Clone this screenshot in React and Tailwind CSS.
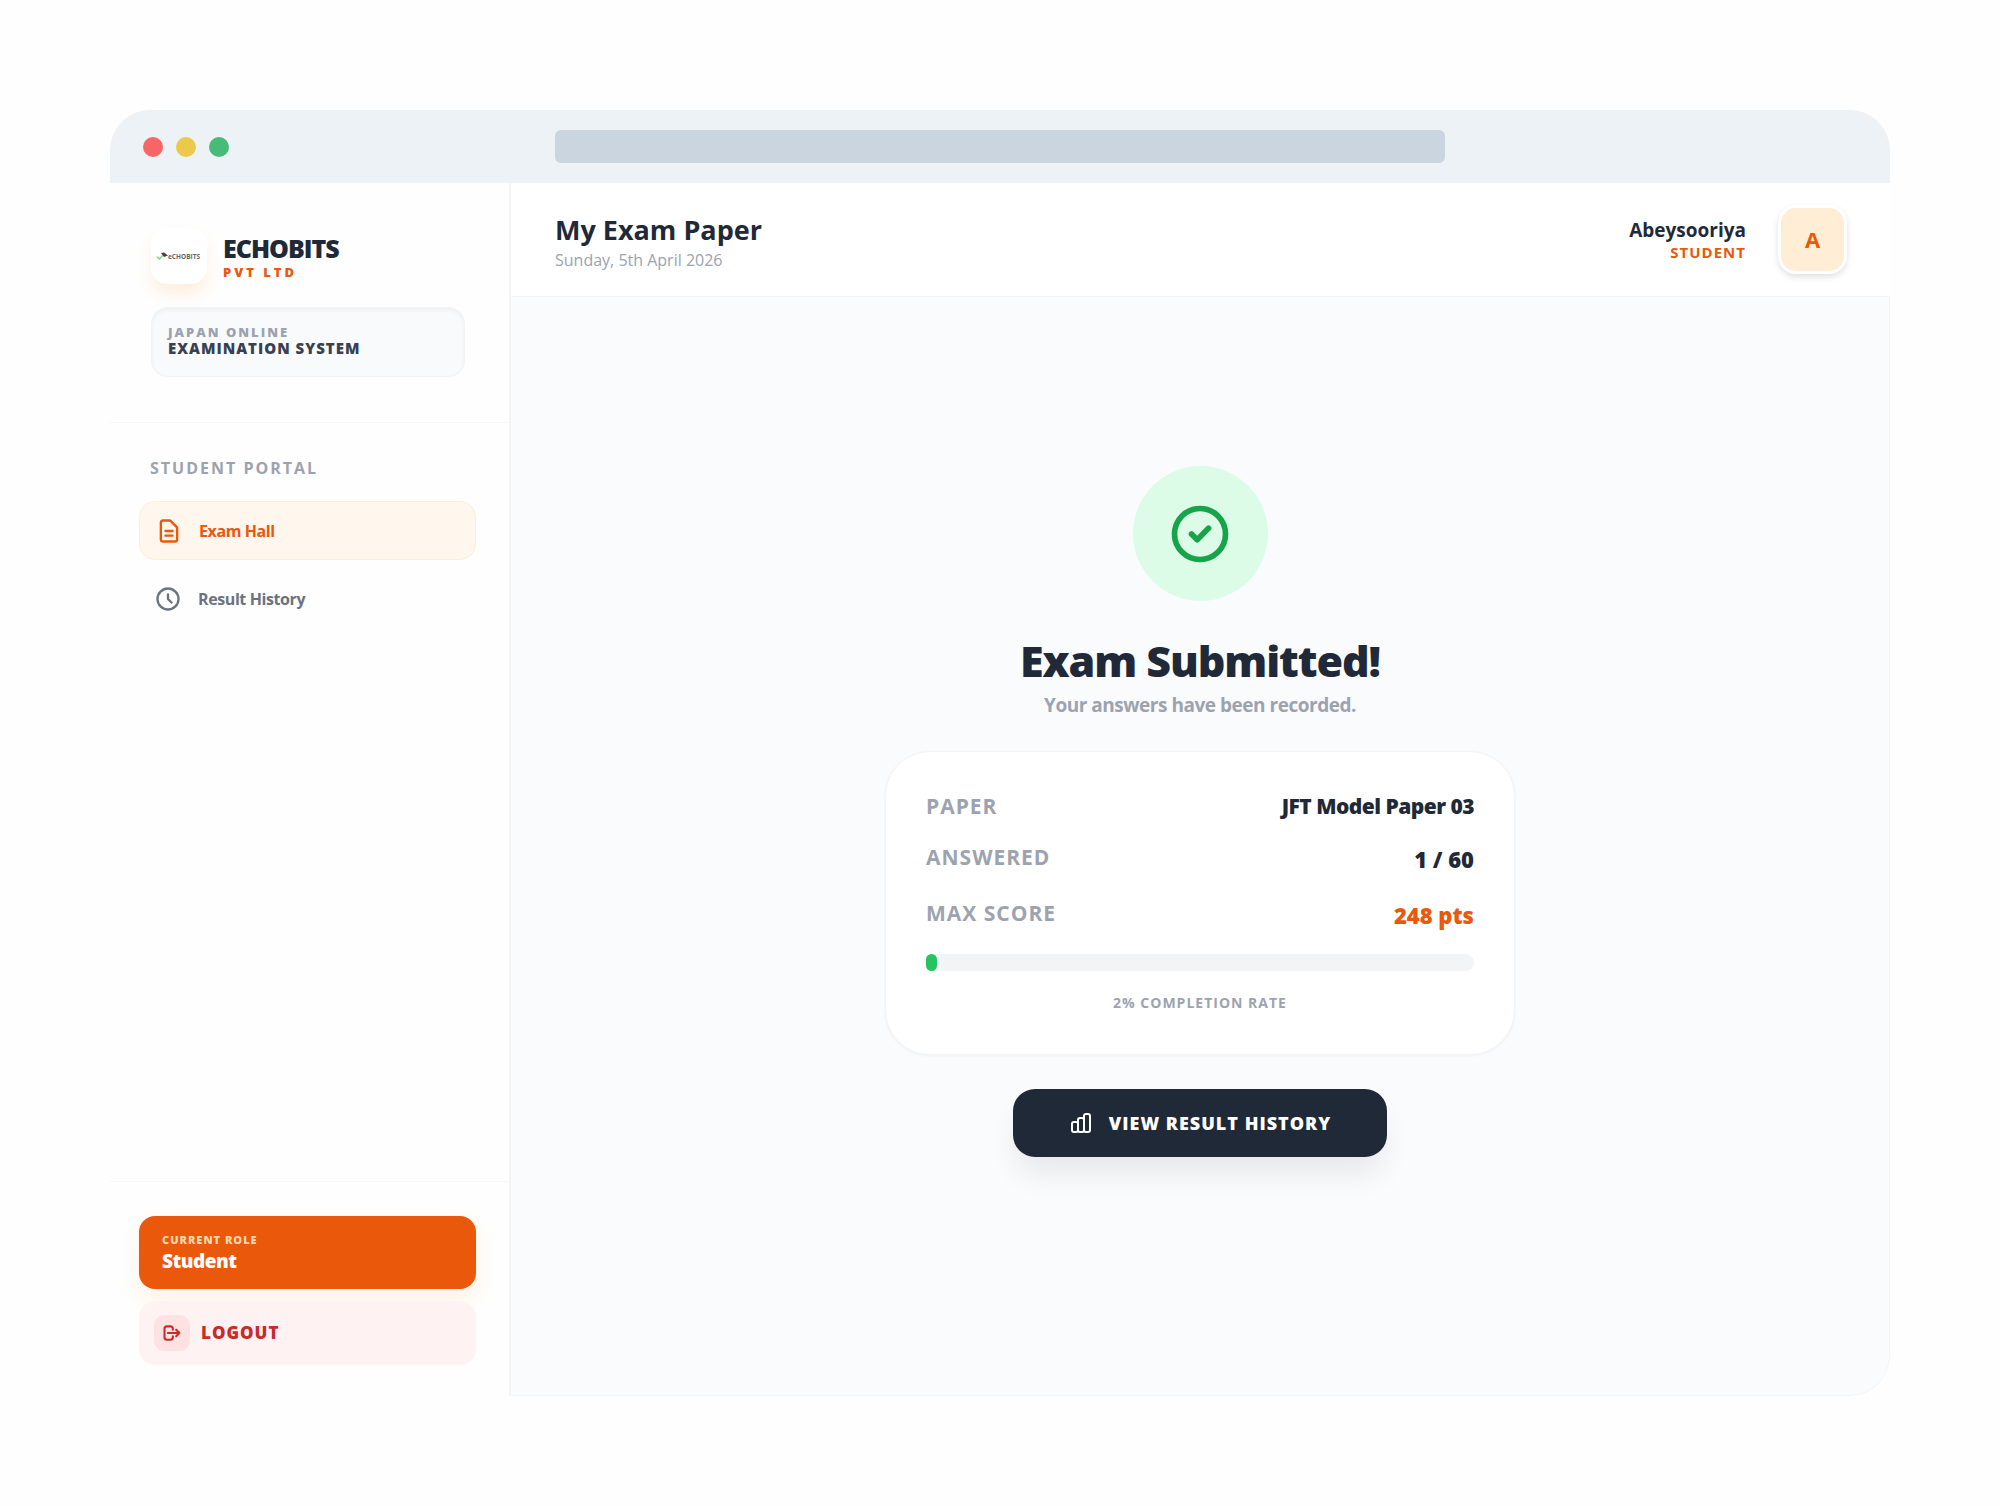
import React from 'react';

const student = { name: 'Abeysooriya', role: 'Student' };
const exam = { paper: 'JFT Model Paper 03', answered: 1, total: 60, maxScore: 248 };

function Logo() {
  return (
    <div className="flex size-14 items-center justify-center rounded-2xl bg-white shadow-[0_10px_16px_-2px_rgba(255,215,170,0.45)]">
      <svg viewBox="0 0 46 10" className="h-[10px] w-[46px]" aria-label="Echobits logo">
        <path d="M1 5.5 L3.5 8 L7 4" stroke="#86dc86" strokeWidth="1.6" fill="none" />
        <path d="M5 2 L8 1.5 L12 4.5 L8 6 Z" fill="#4b3a52" />
        <text x="12" y="7.5" fontSize="6.5" fontWeight="700" fill="#666" fontFamily="Open Sans, sans-serif">eCHOBITS</text>
      </svg>
    </div>
  );
}

function DocumentIcon() {
  return (
    <svg viewBox="0 0 24 24" className="size-7" fill="none" stroke="currentColor" strokeWidth="2" strokeLinecap="round" strokeLinejoin="round">
      <path d="M9 12h6m-6 4h6m2 5H7a2 2 0 01-2-2V5a2 2 0 012-2h5.586a1 1 0 01.707.293l5.414 5.414a1 1 0 01.293.707V19a2 2 0 01-2 2z" />
    </svg>
  );
}

function ClockIcon() {
  return (
    <svg viewBox="0 0 24 24" className="size-7" fill="none" stroke="currentColor" strokeWidth="2" strokeLinecap="round" strokeLinejoin="round">
      <path d="M12 8v4l3 3m6-3a9 9 0 11-18 0 9 9 0 0118 0z" />
    </svg>
  );
}

function LogoutIcon() {
  return (
    <svg viewBox="0 0 24 24" className="size-5" fill="none" stroke="currentColor" strokeWidth="2.5" strokeLinecap="round" strokeLinejoin="round">
      <path d="M17 16l4-4m0 0l-4-4m4 4H7m6 4v1a3 3 0 01-3 3H6a3 3 0 01-3-3V7a3 3 0 013-3h4a3 3 0 013 3v1" />
    </svg>
  );
}

function ChartIcon() {
  return (
    <svg viewBox="0 0 24 24" className="size-6" fill="none" stroke="currentColor" strokeWidth="2" strokeLinecap="round" strokeLinejoin="round">
      <path d="M9 19v-6a2 2 0 00-2-2H5a2 2 0 00-2 2v6a2 2 0 002 2h2a2 2 0 002-2zm0 0V9a2 2 0 012-2h2a2 2 0 012 2v10m-6 0a2 2 0 002 2h2a2 2 0 002-2m0 0V5a2 2 0 012-2h2a2 2 0 012 2v14a2 2 0 01-2 2h-2a2 2 0 01-2-2z" />
    </svg>
  );
}

function BrowserBar() {
  return (
    <div className="flex h-[73px] shrink-0 items-center bg-[#edf2f7]">
      <div className="flex w-1/4 gap-[13px] pl-[33px]">
        <span className="size-5 rounded-full bg-[#f76565]" />
        <span className="size-5 rounded-full bg-[#ecc94b]" />
        <span className="size-5 rounded-full bg-[#48bb78]" />
      </div>
      <div className="h-[33px] w-1/2 rounded-md bg-[#cbd5e0]" />
    </div>
  );
}

function Sidebar() {
  return (
    <aside className="flex w-[401px] shrink-0 flex-col border-r-2 border-[#f3f4f6] bg-[#fefefe]">
      <div className="border-b border-[#f6f7f8] pt-[45px] pr-11 pb-[45px] pl-[41px]">
        <div className="flex items-center gap-4">
          <Logo />
          <div className="pt-1">
            <p className="text-[25px] leading-7 font-extrabold tracking-[-1px] text-[#1f2937]">ECHOBITS</p>
            <p className="text-[13px] leading-5 font-extrabold tracking-[3px] text-[#ea580c]">PVT LTD</p>
          </div>
        </div>
        <div className="mt-[23px] rounded-2xl border border-gray-100 bg-[#f9fafb] px-4 pt-4 pb-5 shadow-[inset_0_2px_4px_rgba(0,0,0,0.05)]">
          <p className="text-[13px] leading-4 font-extrabold tracking-[2px] text-[#9ca3af]">JAPAN ONLINE</p>
          <p className="text-[15px] leading-4 font-extrabold tracking-[1px] text-[#374151]">EXAMINATION SYSTEM</p>
        </div>
      </div>

      <nav className="flex-1 pt-[33px] pr-[33px] pl-[29px]">
        <h2 className="px-[11px] text-[16px] leading-6 font-bold tracking-[2px] text-[#9ca3af]">STUDENT PORTAL</h2>
        <a href="#exam-hall" className="mt-[21px] flex h-[59px] items-center gap-4 rounded-2xl border border-orange-100 bg-[#fff7ed] px-[15px] text-[16px] font-bold tracking-tight text-[#ea580c]">
          <DocumentIcon />
          Exam Hall
        </a>
        <a href="#result-history" className="mt-[9px] flex h-[59px] items-center gap-4 px-[15px] text-[16px] font-bold tracking-tight text-[#6b7280]">
          <ClockIcon />
          Result History
        </a>
      </nav>

      <div className="border-t border-[#f6f7f8] pt-[34px] pr-[33px] pb-[31px] pl-[29px]">
        <div className="rounded-2xl bg-[#ea580c] px-[23px] py-[15px] text-white shadow-[0_10px_20px_rgba(255,237,213,0.7)]">
          <p className="text-[11px] leading-[18px] font-extrabold tracking-[1px] text-[#fed7aa]">CURRENT ROLE</p>
          <p className="text-[19px] leading-[25px] font-extrabold tracking-tight">{student.role}</p>
        </div>
        <button type="button" className="mt-3 flex h-16 w-full items-center gap-[11px] rounded-2xl bg-[#fef2f2] px-[15px] text-[17px] font-extrabold tracking-[1px] text-[#c92a2a]">
          <span className="flex size-9 items-center justify-center rounded-[10px] bg-[#fee2e2]">
            <LogoutIcon />
          </span>
          LOGOUT
        </button>
      </div>
    </aside>
  );
}

function Header() {
  return (
    <header className="flex h-[114px] items-center justify-between border-b border-gray-100 bg-white pr-[43px] pl-11">
      <div className="pt-1">
        <h1 className="text-[27px] leading-9 font-bold text-[#1f2937]">My Exam Paper</h1>
        <p className="text-[16px] leading-6 text-[#9ca3af]">Sunday, 5th April 2026</p>
      </div>
      <div className="flex items-center gap-8">
        <div className="text-right">
          <p className="text-[19px] leading-6 font-bold text-[#1f2937]">{student.name}</p>
          <p className="text-[15px] leading-5 font-bold tracking-[1px] text-[#ea580c] uppercase">{student.role}</p>
        </div>
        <div className="flex size-[69px] items-center justify-center rounded-[18px] border-3 border-white bg-[#ffedd5] text-[22px] font-bold text-[#ea580c] shadow-[0_3px_6px_rgba(0,0,0,0.12)]">
          {student.name[0]}
        </div>
      </div>
    </header>
  );
}

function ResultCard() {
  const rate = Math.round((exam.answered / exam.total) * 100);

  return (
    <section className="mt-[30px] w-full max-w-[630px] rounded-[45px] border border-gray-100 bg-white px-10 pt-[38px] pb-[39px] shadow-[0_1px_3px_rgba(0,0,0,0.05)]">
      <dl className="font-extrabold text-[#1f2937]">
        <div className="flex justify-between">
          <dt className="text-[21px] leading-8 font-bold tracking-[1px] text-[#9ca3af]">PAPER</dt>
          <dd className="text-[21px] leading-8 tracking-tight">{exam.paper}</dd>
        </div>
        <div className="mt-[19px] flex justify-between">
          <dt className="text-[21px] leading-8 font-bold tracking-[1px] text-[#9ca3af]">ANSWERED</dt>
          <dd className="text-[22px] leading-9">{exam.answered} / {exam.total}</dd>
        </div>
        <div className="mt-5 flex justify-between">
          <dt className="text-[21px] leading-8 font-bold tracking-[1px] text-[#9ca3af]">MAX SCORE</dt>
          <dd className="text-[22px] leading-9 text-[#ea580c]">{exam.maxScore} pts</dd>
        </div>
      </dl>
      <div className="mt-[21px] h-[17px] rounded-full bg-gray-100">
        <div className="h-full rounded-full bg-[#22c55e]" style={{ width: `${rate}%` }} />
      </div>
      <p className="mt-5 text-center text-[14px] leading-6 font-bold tracking-[1px] text-[#9ca3af]">{rate}% COMPLETION RATE</p>
    </section>
  );
}

function App() {
  return (
    <div className="flex min-h-screen flex-col bg-[#fefefe] p-[110px] font-['Open_Sans','Noto_Sans',sans-serif]">
      <div className="flex flex-1 flex-col overflow-hidden rounded-t-[40px] rounded-br-[40px]">
        <BrowserBar />
        <div className="flex flex-1">
          <Sidebar />
          <div className="flex flex-1 flex-col">
            <Header />
            <main className="flex flex-1 flex-col items-center justify-center rounded-br-[40px] border-r border-b border-gray-100 bg-[#fafbfd] pb-[69px]">
              <div className="flex size-[135px] items-center justify-center rounded-full bg-[#dcfce7] text-[#16a34a]">
                <svg viewBox="0 0 24 24" className="size-[68px]" fill="none" stroke="currentColor" strokeWidth="2" strokeLinecap="round" strokeLinejoin="round">
                  <path d="M9 12l2 2 4-4m6 2a9 9 0 11-18 0 9 9 0 0118 0z" />
                </svg>
              </div>
              <h2 className="mt-8 text-[43px] leading-[56px] font-extrabold tracking-tight text-[#1f2937]">Exam Submitted!</h2>
              <p className="text-[19px] leading-8 font-bold tracking-tight text-[#9ca3af]">Your answers have been recorded.</p>
              <ResultCard />
              <button type="button" className="mt-[34px] flex h-[68px] items-center gap-4 rounded-[22px] bg-[#1f2937] px-14 text-[18px] font-extrabold tracking-[1px] text-white shadow-[0_20px_30px_-4px_rgba(0,0,0,0.08)]">
                <ChartIcon />
                VIEW RESULT HISTORY
              </button>
            </main>
          </div>
        </div>
      </div>
    </div>
  );
}

export default App;
